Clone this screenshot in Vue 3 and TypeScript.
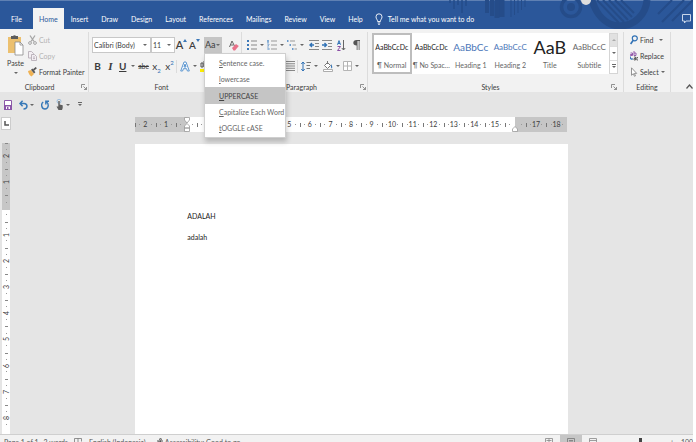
<script setup lang="ts">
import { ref } from 'vue'

interface StyleCard { name: string; sample: string; kind: string }
interface CaseItem { key: string; rest: string }

const tabs: string[] = ['File', 'Home', 'Insert', 'Draw', 'Design', 'Layout', 'References', 'Mailings', 'Review', 'View', 'Help']
const activeTab = ref('Home')

const styleCards: StyleCard[] = [
  { name: '¶ Normal', sample: 'AaBbCcDc', kind: 'plain' },
  { name: '¶ No Spac...', sample: 'AaBbCcDc', kind: 'plain' },
  { name: 'Heading 1', sample: 'AaBbCc', kind: 'h1' },
  { name: 'Heading 2', sample: 'AaBbCcC', kind: 'h2' },
  { name: 'Title', sample: 'AaB', kind: 'title' },
  { name: 'Subtitle', sample: 'AaBbCcC', kind: 'subtitle' },
]
const activeStyle = ref(0)

const caseItems: CaseItem[] = [
  { key: 'S', rest: 'entence case.' },
  { key: 'l', rest: 'owercase' },
  { key: 'U', rest: 'PPERCASE' },
  { key: 'C', rest: 'apitalize Each Word' },
  { key: 't', rest: 'OGGLE cASE' },
]
const hoveredCase = ref(2)
const menuOpen = ref(true)

// Numbers under the open menu and under the indent handles stay blank.
const columnMarks: string[] = Array.from({ length: 21 }, (_, i) => {
  const n = i - 2
  return (n >= 0 && n <= 4) || n === 16 ? '' : String(Math.abs(n))
})
const rowMarks: string[] = Array.from({ length: 11 }, (_, i) => (i === 2 ? '' : String(Math.abs(i - 2))))

const fontName = ref('Calibri (Body)')
const fontSize = ref('11')
const zoom = ref(100)
const paragraphs: string[] = ['ADALAH', 'adalah']
</script>

<template>
  <div class="app">
    <header class="titlebar">
      <svg class="art" viewBox="0 0 253 29" width="253" height="29" aria-hidden="true">
        <g fill="none" stroke="#254c89">
          <path d="M10 0v3M14 0v9M18 0v5M22 0v13M26 0v6" stroke-width="1.500" />
          <path d="M47 0v13M52 0v16" stroke-width="4" />
          <path d="M57 0v18M62 0v17" stroke-width="5" />
          <path d="M71 0v17M74.500 0v15M78 0v13M81.500 0v10M85 0v7" stroke-width="1" />
          <circle cx="131" cy="7" r="9.500" stroke-width="3.500" />
          <circle cx="131" cy="7" r="4" fill="#254c89" stroke="none" />
          <path d="M152 0c4 14 13 25 27 26c16 0 27-12 28-26" stroke-width="7" />
          <path d="M157 0l22 23M163 0l21 22M169 0l19 20M175 0l17 17M181 0l13 13" stroke-width="2" />
          <path d="M218 14l14-14M222 22l22-22M232 21l21-21" stroke-width="2" />
        </g>
        <circle cx="146" cy="0" r="5" fill="#dedede" />
      </svg>
      <nav class="tabs" aria-label="Ribbon tabs">
        <button v-for="t in tabs" :key="t" type="button" class="tab" :class="{ active: t === activeTab }" @click="activeTab = t">{{ t }}</button>
      </nav>
      <button type="button" class="tell">
        <svg width="8" height="12" viewBox="0 0 8 12" fill="none" stroke="#fff" stroke-width=".9"><path d="M2.600 8.500C2.600 6.500 1 6 1 3.800a3 3 0 0 1 6 0C7 6 5.400 6.500 5.400 8.500zM2.700 10h2.600M3.200 11.400h1.600" /></svg>
        <span>Tell me what you want to do</span>
      </button>
      <button type="button" class="comment" aria-label="Comments">
        <svg width="9" height="10" viewBox="0 0 9 10" fill="none" stroke="#c9d6ea" stroke-width="1"><path d="M.5.5h8v6.500h-4.500l-1.500 2v-2h-2z" /></svg>
      </button>
    </header>

    <section class="ribbon" aria-label="Home">
      <div class="group clipboard">
        <div class="body clip-body">
          <button type="button" class="paste">
            <svg width="17" height="22" viewBox="0 0 17 22"><path d="M1 3h13v16H1z" fill="#ecc06f" /><path d="M4 2h2a1.800 1.800 0 0 1 3 0h2v3H4z" fill="#5c5c5c" /><path d="M8 8h5l3 3v10H8z" fill="#fff" stroke="#8b8b8b" stroke-width=".8" /><path d="M13 8v3h3" fill="none" stroke="#8b8b8b" stroke-width=".8" /></svg>
            <span>Paste</span>
            <i class="caret"></i>
          </button>
          <div class="stack">
            <button type="button" class="line" disabled>
              <svg width="9" height="10" viewBox="0 0 9 10" fill="none" stroke="#a5a5a5"><path d="M2 .5l4 6M7 .5l-4 6" stroke-width="1.300" /><circle cx="2" cy="8" r="1.400" /><circle cx="7" cy="8" r="1.400" /></svg>
              <span>Cut</span>
            </button>
            <button type="button" class="line" disabled>
              <svg width="9" height="10" viewBox="0 0 9 10" fill="#f3eff3" stroke="#b7aeb7" stroke-width=".9"><path d="M.5.5h3l2 2v4.500h-5z" /><path d="M3.500 3.500h3l2 2v4h-5z" /><path d="M5 6h2M5 7.600h2" /></svg>
              <span>Copy</span>
            </button>
            <button type="button" class="line">
              <svg width="9" height="10" viewBox="0 0 9 10"><path d="M0 4l3-1 3 4-2.500 2.500C1.500 8.500.5 6.500 0 4z" fill="#efb254" /><path d="M3 2.800l1.400-1.200 3 3.600L6 6.500z" fill="#555" /><path d="M5.500 3L8.300.6" stroke="#555" stroke-width="1.700" /></svg>
              <span>Format Painter</span>
            </button>
          </div>
        </div>
        <div class="caption wide"><span>Clipboard</span><button type="button" class="launch" aria-label="Clipboard settings"><svg width="6" height="6" viewBox="0 0 6 6" fill="none" stroke="#777" stroke-width=".8"><path d="M.5 4V.5H4M2.500 2.500l3 3M5.500 3v2.500H3" /></svg></button></div>
      </div>

      <div class="group font">
        <div class="body rows">
          <div class="row">
            <label class="combo name"><select v-model="fontName" aria-label="Font"><option>Calibri (Body)</option><option>Arial</option></select><i class="caret"></i></label>
            <label class="combo size"><select v-model="fontSize" aria-label="Font size"><option>11</option><option>12</option></select><i class="caret"></i></label>
            <button type="button" class="tool grow" aria-label="Increase font size"><b>A</b><svg width="4" height="3" viewBox="0 0 4 3"><path d="M0 3l2-3 2 3z" fill="#3c78b8" /></svg></button>
            <button type="button" class="tool grow" aria-label="Decrease font size"><b class="less">A</b><svg width="4" height="3" viewBox="0 0 4 3"><path d="M0 0h4L2 3z" fill="#3c78b8" /></svg></button>
            <div class="case">
              <button type="button" class="case-btn" aria-haspopup="menu" :aria-expanded="menuOpen" @click="menuOpen = !menuOpen">Aa<i class="caret"></i></button>
              <div v-if="menuOpen" class="menu" role="menu">
                <button v-for="(c, i) in caseItems" :key="c.rest" type="button" role="menuitem" class="menu-item" :class="{ hot: i === hoveredCase }" @mouseenter="hoveredCase = i"><u>{{ c.key }}</u>{{ c.rest }}</button>
              </div>
            </div>
            <button type="button" class="tool clear" aria-label="Clear formatting"><svg width="10" height="11" viewBox="0 0 10 11"><path d="M.5 7L3 1l2.500 5M1.500 5h3" fill="none" stroke="#666" /><path d="M3 8l4-4 2.800 2L6 10.500H4.500z" fill="#e8728a" /></svg></button>
          </div>
          <div class="row second">
            <button type="button" class="tool"><b>B</b></button>
            <button type="button" class="tool serif"><em>I</em></button>
            <button type="button" class="tool split"><u class="strong">U</u><i class="caret"></i></button>
            <button type="button" class="tool small"><s>abc</s></button>
            <button type="button" class="tool">x<sub>2</sub></button>
            <button type="button" class="tool">x<sup>2</sup></button>
            <span class="rule"></span>
            <button type="button" class="tool split" aria-label="Text effects"><svg width="10" height="11" viewBox="0 0 10 11" fill="#fff" stroke="#5c96d0" stroke-width="1"><path d="M.7 10L4 1h2l3.300 9H7.400l-.8-2.300H3.400L2.600 10zM4 6h2L5 3z" /></svg><i class="caret"></i></button>
            <button type="button" class="tool split" aria-label="Highlight"><svg width="11" height="12" viewBox="0 0 11 12"><path d="M1 3h2v4H1zM4 1v6h2V4H4" fill="none" stroke="#555" /><path d="M6 6l4-5" stroke="#777" stroke-width="1.500" /><path d="M0 9h11v3H0z" fill="#fff000" /></svg></button>
          </div>
        </div>
        <div class="caption wide"><span>Font</span></div>
      </div>

      <div class="group para">
        <div class="body rows">
          <div class="row">
            <button type="button" class="tool split" aria-label="Bullets"><svg width="10" height="10" viewBox="0 0 10 10"><path d="M0 0h2v2H0zM0 4h2v2H0zM0 8h2v2H0z" fill="#3c78b8" /><path d="M4 1h6M4 5h6M4 9h6" stroke="#888" /></svg><i class="caret"></i></button>
            <button type="button" class="tool split" aria-label="Numbering"><svg width="10" height="10" viewBox="0 0 10 10"><path d="M.5 0h1v2.500h-1zM0 4h2v1L.5 6H2M0 8h2v2H0" fill="none" stroke="#6a9acb" stroke-width=".8" /><path d="M4 1h6M4 5h6M4 9h6" stroke="#999" /></svg><i class="caret"></i></button>
            <button type="button" class="tool split" aria-label="Multilevel list"><svg width="10" height="10" viewBox="0 0 10 10"><path d="M0 0h1.500v2H0zM2.500 4H4v2H2.500zM5 8h1.500v2H5z" fill="#6a9acb" /><path d="M3 1h5M5.500 5H9M7.500 9H10" stroke="#999" /></svg><i class="caret"></i></button>
            <span class="gap"></span>
            <button type="button" class="tool" aria-label="Decrease indent"><svg width="10" height="10" viewBox="0 0 10 10"><path d="M0 .5h10M6 3.500h4M6 6.500h4M0 9.500h10" stroke="#888" /><path d="M5 5H1M3 3L1 5l2 2" fill="none" stroke="#2f71b5" stroke-width="1.400" /></svg></button>
            <button type="button" class="tool" aria-label="Increase indent"><svg width="10" height="10" viewBox="0 0 10 10"><path d="M0 .5h10M6 3.500h4M6 6.500h4M0 9.500h10" stroke="#888" /><path d="M0 5h4M2.500 3l2 2-2 2" fill="none" stroke="#2f71b5" stroke-width="1.400" /></svg></button>
            <span class="gap"></span>
            <button type="button" class="tool" aria-label="Sort"><svg width="9" height="11" viewBox="0 0 9 11" fill="none"><path d="M.5 4.800L2 .6l1.500 4.200M1 3.500h2" stroke="#2f71b5" /><path d="M.5 6.500h3l-3 4h3" stroke="#8b4fa5" /><path d="M6.500 0v10M4.800 8l1.700 2 1.700-2" stroke="#666" /></svg></button>
            <span class="gap"></span>
            <button type="button" class="tool" aria-label="Show formatting marks"><svg width="7" height="10" viewBox="0 0 7 10"><path d="M3.500 0H7v1H6.500v9h-.8V1H4.500v9h-.8V5.500C1.500 5.500.3 4.500.3 2.800S1.500 0 3.500 0z" fill="#555" /></svg></button>
          </div>
          <div class="row second">
            <button v-for="a in ['left', 'center', 'right', 'justify']" :key="a" type="button" class="tool" :aria-label="'Align ' + a"><svg width="9" height="10" viewBox="0 0 9 10"><path d="M0 .5h9M0 2.750h9M0 5h9M0 7.250h9M0 9.500h9" stroke="#888" /></svg></button>
            <span class="rule"></span>
            <button type="button" class="tool split" aria-label="Line spacing"><svg width="10" height="11" viewBox="0 0 10 11" fill="none"><path d="M2 1v9M.3 3L2 1l1.700 2M.3 8L2 10l1.700-2" stroke="#2f71b5" /><path d="M5.500 1.500H10M5.500 4.500H9M5.500 7.500H9" stroke="#777" /></svg><i class="caret"></i></button>
            <span class="gap"></span>
            <button type="button" class="tool split" aria-label="Shading"><svg width="10" height="11" viewBox="0 0 10 11"><path d="M1.500 4.500l3-3 3 3-3 3z" fill="#fff" stroke="#777" /><path d="M4.500 0v3" stroke="#777" /><path d="M8 3c1.500 2 1.500 3.500.8 4.500-.8-.6-1-2-.8-4.500z" fill="#2f71b5" /><path d="M.5 8.500h9v2h-9z" fill="#fff" stroke="#999" stroke-width=".8" /></svg><i class="caret"></i></button>
            <button type="button" class="tool split" aria-label="Borders"><svg width="9" height="10" viewBox="0 0 9 10" fill="#fff" stroke="#b5b5b5"><path d="M.5.5h8v9h-8zM4.500.5v9M.5 5h8" /></svg><i class="caret"></i></button>
          </div>
        </div>
        <div class="caption wide"><span>Paragraph</span><button type="button" class="launch" aria-label="Paragraph settings"><svg width="6" height="6" viewBox="0 0 6 6" fill="none" stroke="#777" stroke-width=".8"><path d="M.5 4V.5H4M2.500 2.500l3 3M5.500 3v2.500H3" /></svg></button></div>
      </div>

      <div class="group styles">
        <div class="body gallery">
          <button v-for="(s, i) in styleCards" :key="s.name" type="button" class="card" :class="{ picked: i === activeStyle }" @click="activeStyle = i">
            <span class="sample" :class="s.kind">{{ s.sample }}</span>
            <span class="label">{{ s.name }}</span>
          </button>
          <div class="scroller">
            <button type="button" class="off" aria-label="Previous styles"><i class="caret up"></i></button>
            <button type="button" aria-label="Next styles"><i class="caret"></i></button>
            <button type="button" aria-label="More styles"><i class="caret over"></i></button>
          </div>
        </div>
        <div class="caption wide"><span>Styles</span><button type="button" class="launch" aria-label="Styles settings"><svg width="6" height="6" viewBox="0 0 6 6" fill="none" stroke="#777" stroke-width=".8"><path d="M.5 4V.5H4M2.500 2.500l3 3M5.500 3v2.500H3" /></svg></button></div>
      </div>

      <div class="group editing">
        <div class="body stack">
          <button type="button" class="line"><svg width="8" height="10" viewBox="0 0 8 10" fill="none" stroke="#2f71b5"><circle cx="4.800" cy="3.300" r="2.500" stroke-width="1.200" /><path d="M3.200 5.200L.6 9" stroke-width="1.600" /></svg><span>Find</span><i class="caret far"></i></button>
          <button type="button" class="line"><svg width="8" height="10" viewBox="0 0 8 10" fill="none" stroke-width=".9"><path d="M.5 2h2v2.500h-2v-1h2M4 0v4.500h2V2H4" stroke="#8b4fa5" /><path d="M.5 5.500v2.500h2M1.500 7l1 1-1 1" stroke="#2f71b5" /><path d="M4 6h1.500v3H4V7.500h1.500M8 6.500H6.800V9H8" stroke="#555" /></svg><span>Replace</span></button>
          <button type="button" class="line"><svg width="8" height="10" viewBox="0 0 8 10" fill="#fff" stroke="#888" stroke-width=".9"><path d="M1.500.8v7.500l1.800-1.600 1.200 2.600 1-.5-1.200-2.400h2.400z" /></svg><span>Select</span><i class="caret"></i></button>
        </div>
        <div class="caption"><span>Editing</span></div>
      </div>
      <button type="button" class="collapse" aria-label="Collapse the ribbon"><svg width="7" height="5" viewBox="0 0 7 5" fill="none" stroke="#555" stroke-width="1.200"><path d="M.5 4.500l3-3.500 3 3.500" /></svg></button>
    </section>

    <div class="quick">
      <button type="button" aria-label="Save"><svg width="8" height="10" viewBox="0 0 8 10"><path d="M.5.5h7v9h-7z" fill="#fff" stroke="#8b56a8" /><path d="M0 5h8v5H0z" fill="#8b56a8" /><path d="M2 6.500h4V9H2z" fill="#fff" /><path d="M3 7h1.500v2H3z" fill="#8b56a8" /></svg></button>
      <button type="button" class="undo" aria-label="Undo"><svg width="9" height="10" viewBox="0 0 9 10" fill="none" stroke="#3779b8" stroke-width="1.500"><path d="M3.600.8L1 3.500l2.600 2.700M1 3.500h4c4 0 4 5.500-.5 5.500" /></svg><i class="caret"></i></button>
      <button type="button" aria-label="Redo"><svg width="8" height="10" viewBox="0 0 8 10" fill="none" stroke="#3779b8" stroke-width="1.400"><path d="M2.200 2C-.5 4 .6 9 4 9s4.300-4.500 1.700-7M4.800 4.500V1.200H8" /></svg></button>
      <button type="button" class="touch" aria-label="Touch mode"><svg width="8" height="11" viewBox="0 0 8 11"><circle cx="3" cy="2.300" r="2" fill="none" stroke="#8ab4da" stroke-width=".8" /><path d="M2.300 2h1.400v3.500l3 .8V9L6 11H2.500L.5 7.500h1.800z" fill="#5e5e5e" /></svg><i class="caret"></i></button>
      <button type="button" aria-label="Customize toolbar"><i class="caret over"></i></button>
    </div>

    <div class="ruler-row">
      <button type="button" class="corner" aria-label="Tab stop"><svg width="5" height="5" viewBox="0 0 5 5" fill="none" stroke="#555" stroke-width="1.500"><path d="M1 0v4h4" /></svg></button>
      <div class="ruler">
        <span v-for="(m, i) in columnMarks" :key="i" class="mark">{{ m }}</span>
        <svg class="indent left" width="6" height="15" viewBox="0 0 6 15" fill="#fff" stroke="#999" stroke-width=".8"><path d="M.5.5h5V3L3 6 .5 3zM3 6.500L5.500 9v2h-5V9zM.5 11h5v3.500h-5z" /></svg>
        <svg class="indent right" width="6" height="6" viewBox="0 0 6 6" fill="#fff" stroke="#999" stroke-width=".8"><path d="M3 .5L5.500 3v2.500h-5V3z" /></svg>
      </div>
    </div>

    <main class="workspace">
      <div class="vruler"><span v-for="(m, i) in rowMarks" :key="i" class="vmark"><span>{{ m }}</span></span></div>
      <div class="desk">
        <article class="page"><p v-for="p in paragraphs" :key="p">{{ p }}</p></article>
      </div>
    </main>

    <footer class="status">
      <div class="status-in">
        <span class="s-page">Page 1 of 1</span>
        <span class="s-words">2 words</span>
        <svg class="s-proof" width="9" height="9" viewBox="0 0 9 9" fill="none" stroke="#777" stroke-width=".8"><path d="M.5.5h3.500v7H.5zM4 .5h3.500v3M5 6l1.500 1.500L8.500 4" /></svg>
        <span class="s-lang">English (Indonesia)</span>
        <svg width="9" height="9" viewBox="0 0 9 9" fill="none" stroke="#555"><circle cx="4.500" cy="1.300" r=".9" /><path d="M1 3h6M3 3v3L1.500 9M4.500 5v-2M5 6l1.200 1.200L8.500 5" /></svg>
        <span class="s-acc">Accessibility: Good to go</span>
        <span class="views">
          <button type="button" aria-label="Read mode"><svg width="8" height="8" viewBox="0 0 8 8" fill="none" stroke="#888" stroke-width=".8"><path d="M.5.5h7v7h-7zM4 .5v7M1.500 2.500h5M1.500 4.500h5" /></svg></button>
          <button type="button" class="on" aria-label="Print layout"><svg width="8" height="8" viewBox="0 0 8 8" fill="none" stroke="#777" stroke-width=".8"><path d="M.5.5h7v7h-7zM2 2.500h4M2 4h4M2 5.500h4" /></svg></button>
          <button type="button" aria-label="Web layout"><svg width="8" height="8" viewBox="0 0 8 8" fill="none" stroke="#888" stroke-width=".8"><path d="M.5.5h7v7h-7zM.5 2.500h7M4 5h3" /></svg></button>
        </span>
        <span class="minus">−</span>
        <input v-model="zoom" class="zoom" type="range" min="0" max="200" aria-label="Zoom" />
        <span class="plus">+</span>
        <span class="pct">100%</span>
      </div>
    </footer>
  </div>
</template>

<style>
body { margin: 0; background: #fff; }
</style>

<style scoped>
.app {
  box-sizing: border-box;
  display: flex;
  flex-direction: column;
  height: 100vh;
  margin-right: 3px;
  overflow: hidden;
  background: #e5e5e5;
  color: #3c3c3c;
  font-family: Lato, sans-serif;
  font-size: 7px;
  line-height: 10px;
}
button, select, input { font: inherit; color: inherit; }
button { display: flex; align-items: center; margin: 0; padding: 0; border: 0; background: none; white-space: nowrap; }
svg { display: block; flex: none; }

.caret { flex: none; width: 0; height: 0; border: 2px solid transparent; border-top-color: #666; border-bottom: 0; }
.caret.up { border-top: 0; border-bottom: 2px solid #aaa; }
.caret.over { position: relative; }
.caret.over::before { content: ''; position: absolute; left: -2px; top: -4px; width: 4px; height: 1px; background: #666; }

.titlebar { position: relative; display: flex; flex: none; height: 29px; background: #2b579a; border-top: 1px solid #5f80b3; box-sizing: border-box; color: #fff; }
.art { position: absolute; right: 0; top: -1px; }
.tabs { display: flex; align-items: flex-end; padding-left: 4px; }
.tab { height: 21px; padding: 0 6px 0 7px; }
.tab:first-child { margin-right: 5px; }
.tab.active { padding: 0 6px; background: #f3f3f3; color: #2b579a; }
.tell { position: relative; height: 21px; align-self: flex-end; margin-left: 6px; gap: 5px; }
.comment { position: relative; margin-left: auto; margin-right: 2px; height: 21px; align-self: flex-end; }

.ribbon { display: flex; flex: none; height: 63px; padding-top: 3px; box-sizing: border-box; background: #f2f2f2; }
.group { display: flex; flex-direction: column; flex: none; box-sizing: border-box; border-right: 1px solid #dcdcdc; }
.body { height: 50px; flex: none; }
.caption { position: relative; display: flex; justify-content: center; height: 10px; }
.caption.wide { padding-right: 9px; }
.launch { position: absolute; right: 1px; top: 2px; }
.clipboard { width: 89px; }
.font { width: 153px; padding-left: 2px; }
.para { width: 126px; padding-left: 3px; }
.styles { flex: 1; min-width: 0; padding: 0 5px 0 4px; }
.editing { width: 47px; }

.clip-body { display: flex; }
.paste { flex: none; width: 28px; padding: 2px 0 0 3px; flex-direction: column; justify-content: flex-start; box-sizing: border-box; gap: 2px; }
.paste .caret { margin-top: 2px; }
.stack { display: flex; flex-direction: column; }
.line { height: 16px; gap: 2px; }
.line:disabled { color: #b3b3b3; }
.editing .line { padding-left: 6px; }
.line .caret { margin-left: 0; }
.line .far { margin-left: 4px; }

.rows { display: flex; flex-direction: column; gap: 5px; padding-top: 5px; box-sizing: border-box; }
.row { display: flex; align-items: center; height: 16px; }
.combo { display: grid; box-sizing: border-box; height: 16px; align-items: center; border: 1px solid #c8c8c8; background: #fff; }
.combo select { grid-area: 1 / 1; width: 100%; height: 14px; padding: 0 0 0 1px; border: 0; appearance: none; background: transparent; }
.combo .caret { grid-area: 1 / 1; justify-self: end; margin-right: 3px; }
.name { width: 59px; margin-left: 1px; }
.size { width: 24px; }
.tool { width: 13px; height: 16px; flex: none; justify-content: center; font-size: 10px; }
.split { width: 20px; justify-content: flex-start; padding-left: 2px; gap: 3px; box-sizing: border-box; }
.split .caret { margin-left: auto; margin-right: 2px; }
.serif { font-family: 'Liberation Serif', serif; font-weight: bold; font-size: 11px; }
.strong { font-weight: bold; }
.small { font-size: 7px; }
.tool sub, .tool sup { font-size: 6px; line-height: 6px; color: #2f71b5; }
.tool sub { align-self: flex-end; }
.tool sup { align-self: flex-start; padding-top: 2px; }
.grow { font-size: 11px; }
.grow b { font-weight: 600; }
.grow .less { font-size: 10px; }
.grow svg { align-self: flex-start; margin-top: 2px; }
.rule { width: 1px; height: 13px; margin-right: 1px; background: #dcdcdc; }
.gap { width: 2px; }

.case { position: relative; margin-left: 3px; }
.case-btn { width: 18px; height: 16px; justify-content: space-between; padding: 0 2px 0 1px; box-sizing: border-box; background: #c5c5c5; font-size: 9px; }
.clear { margin-left: 5px; }
.menu { position: absolute; z-index: 5; left: 0; top: 16px; width: 82px; padding: 1px 0; box-sizing: border-box; background: #fff; border: 1px solid #cfcfcf; box-shadow: 1px 4px 5px #0003; }
.menu-item { width: 100%; height: 16px; padding-left: 14px; color: #666; }
.menu-item.hot { height: 17px; background: #c5c5c5; color: #444; }

.gallery { display: flex; align-items: flex-start; height: 46px; margin-bottom: 4px; padding-top: 1px; box-sizing: border-box; }
.card { flex: 1; min-width: 0; height: 41px; flex-direction: column; background: #fff; box-sizing: border-box; border: 2px solid #fff; }
.card.picked { border-color: #bdbdbd; }
.sample { display: flex; align-items: center; flex: 1; color: #222; }
.label { line-height: 13px; color: #666; }
.plain { font-size: 7px; }
.h1 { font-size: 10px; color: #4a76b8; }
.h2 { font-size: 8px; color: #4a76b8; }
.title { font-size: 18px; }
.subtitle { font-size: 8px; color: #666; }
.scroller { display: flex; flex-direction: column; width: 9px; height: 41px; background: #fff; border: 1px solid #d5d5d5; box-sizing: border-box; }
.scroller button { flex: 1; justify-content: center; border-bottom: 1px solid #ddd; }
.scroller button:last-child { border-bottom: 0; }
.scroller .off { background: #e1e1e1; }
.collapse { align-self: flex-end; margin-left: auto; margin-bottom: 3px; width: 22px; justify-content: flex-end; }

.quick { display: flex; flex: none; align-items: center; height: 25px; padding-left: 4px; gap: 7px; }
.quick .caret { margin-left: 1px; }
.undo, .touch { gap: 1px; }

.ruler-row { display: flex; flex: none; align-items: flex-start; height: 26px; padding-right: 2px; }
.corner { width: 10px; height: 13px; flex: none; justify-content: center; margin-left: 1px; background: #fff; border: 1px solid #ccc; box-sizing: border-box; }
.ruler { position: relative; display: flex; width: 62.500%; height: 15px; margin: 0 auto; background: linear-gradient(90deg, #c6c6c6 12%, #fff 12% 88%, #c6c6c6 88%); }
.mark { flex: 1; text-align: center; line-height: 15px; background: linear-gradient(#777, #777) 0 50% / 1px 4px, linear-gradient(#999, #999) 22% 50% / 1px 1px, linear-gradient(#999, #999) 80% 50% / 1px 1px; background-repeat: no-repeat; }
.indent { position: absolute; }
.indent.left { left: 12%; top: 0; transform: translateX(-50%); }
.indent.right { left: 88%; bottom: 0; transform: translateX(-50%); }

.workspace { display: flex; flex: 1; min-height: 0; }
.vruler { display: flex; flex-direction: column; width: 8px; margin-left: 2px; padding-bottom: 3px; background: linear-gradient(#c6c6c6 23%, #fff 23%); }
.vmark { display: flex; flex: 1; align-items: center; justify-content: center; background: linear-gradient(#888, #888) 50% 0 / 3px 1px, linear-gradient(#999, #999) 50% 25% / 1px 1px, linear-gradient(#999, #999) 50% 75% / 1px 1px; background-repeat: no-repeat; }
.vmark span { writing-mode: vertical-rl; transform: rotate(180deg); line-height: 8px; }
.desk { display: flex; flex: 1; justify-content: center; padding-top: 1px; }
.page { width: 63.300%; box-sizing: border-box; padding: 67px 52px 0; background: #fff; }
.page p { margin: 0 0 11px; color: #222; }

.status { flex: none; height: 8px; overflow: hidden; background: #f2f2f2; border-top: 1px solid #cfcfcf; box-sizing: border-box; }
.status-in { display: flex; align-items: center; height: 14px; padding-left: 4px; color: #555; white-space: nowrap; }
.s-page { margin-right: 5px; }
.s-words { margin-right: 6px; }
.s-proof { margin-right: 6px; }
.s-lang { margin-right: 10px; }
.views { display: flex; align-self: stretch; margin-left: auto; }
.views button { width: 22px; justify-content: center; }
.views .on { background: #c6c6c6; }
.minus { margin-left: 4px; }
.zoom { appearance: none; width: 54px; height: 9px; margin: 0 2px; background: linear-gradient(#999, #999) 0 50% / 100% 1px no-repeat; }
.zoom::-webkit-slider-thumb { appearance: none; width: 3px; height: 9px; background: #444; }
.pct { margin-left: 7px; width: 12px; overflow: hidden; }
</style>
